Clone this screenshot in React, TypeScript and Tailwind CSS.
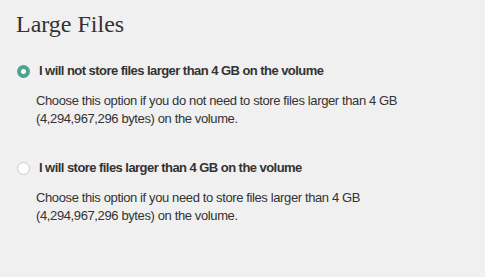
import React from 'react';

const sans = { fontFamily: '"Liberation Sans", Arial, sans-serif' };

const Option: React.FC<{ checked: boolean; label: string; text: string }> = ({ checked, label, text }) => (
  <div className="flex flex-col">
    <label className="flex items-center h-[24px]">
      {checked ? (
        <span className="w-[13px] h-[13px] rounded-full bg-[#4fa38c] flex items-center justify-center ml-[17px]">
          <span className="w-[5px] h-[5px] rounded-full bg-white" />
        </span>
      ) : (
        <span className="w-[13px] h-[13px] rounded-full bg-white border border-[#c9c9c9] ml-[17px]" />
      )}
      <span className="ml-[9px] text-[13px]/[18px] tracking-[-0.55px] font-bold text-[#333]">{label}</span>
    </label>
    <p className="ml-[36px] mt-[9px] text-[13px]/[18px] tracking-[-0.38px] text-[#333] w-[370px]">{text}</p>
  </div>
);

export default function App() {
  return (
    <div className="w-[485px] h-[277px] bg-[#f0f0f0] overflow-hidden" style={sans}>
      <h1 className="pl-[16px] pt-[9px] text-[24px]/[30px] text-[#333]" style={{ fontFamily: '"Liberation Serif", serif' }}>
        Large Files
      </h1>
      <div className="mt-[20px] flex flex-col gap-[28px]">
        <Option
          checked
          label="I will not store files larger than 4 GB on the volume"
          text="Choose this option if you do not need to store files larger than 4 GB (4,294,967,296 bytes) on the volume."
        />
        <Option
          checked={false}
          label="I will store files larger than 4 GB on the volume"
          text="Choose this option if you need to store files larger than 4 GB (4,294,967,296 bytes) on the volume."
        />
      </div>
    </div>
  );
}
